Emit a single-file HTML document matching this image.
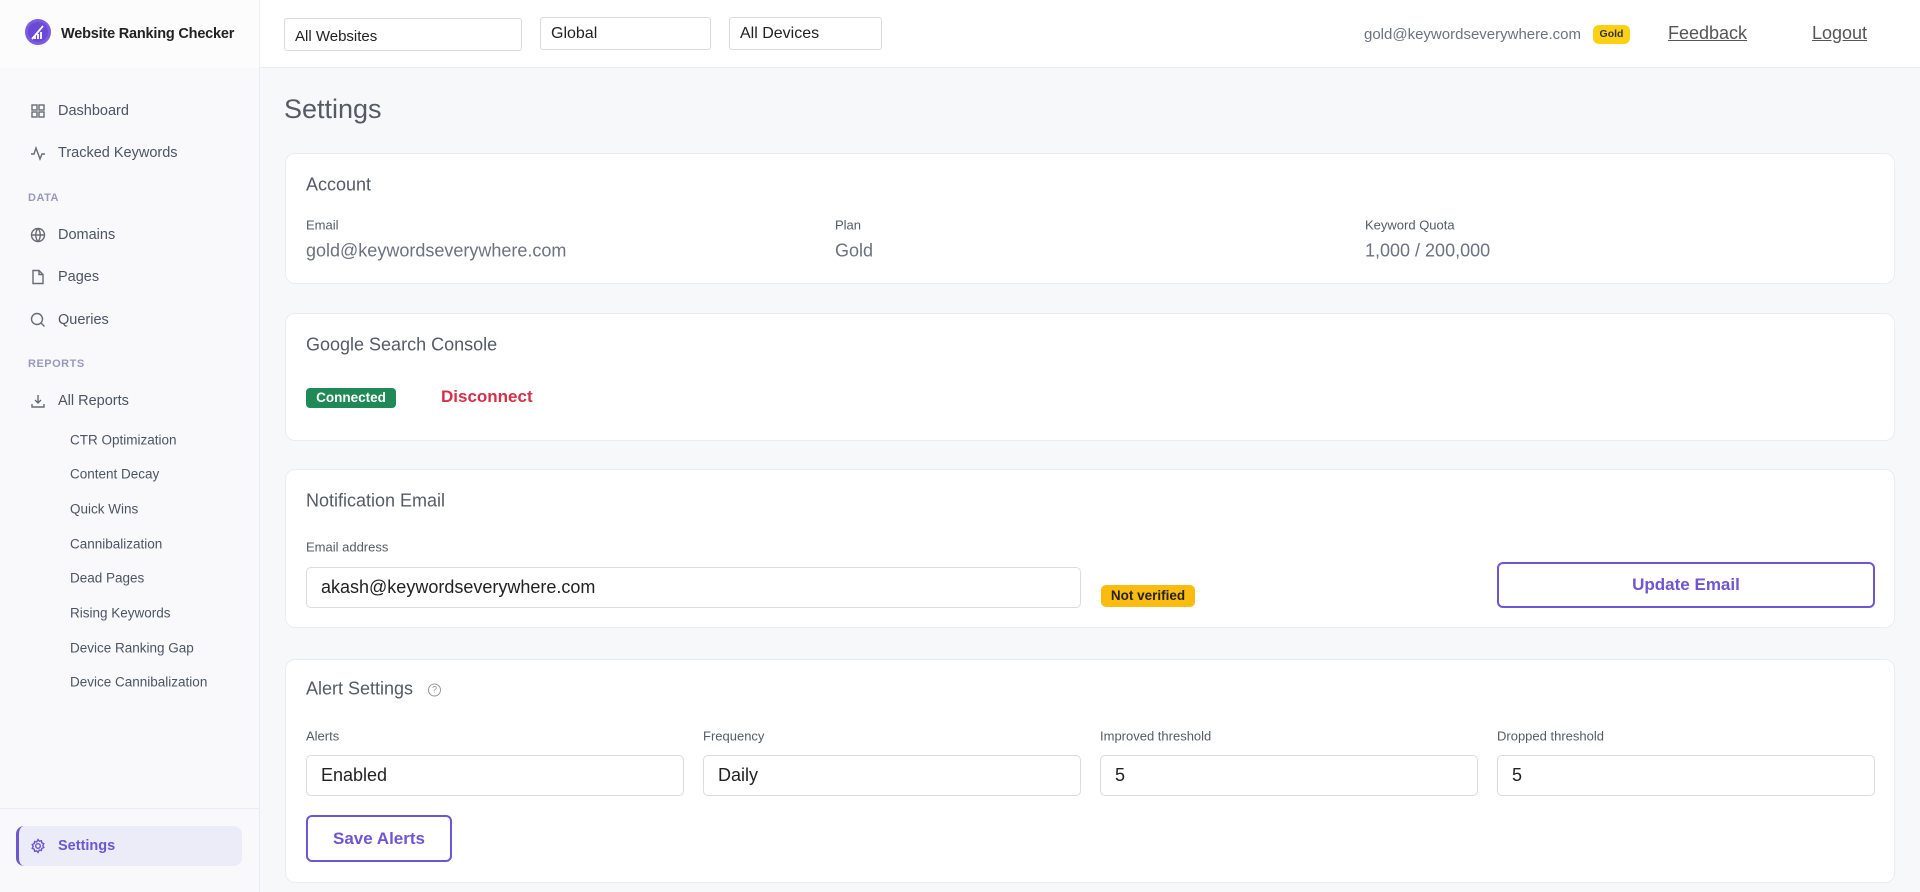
<!DOCTYPE html>
<html><head><meta charset="utf-8"><style>
*{box-sizing:border-box;margin:0;padding:0}
body{width:1920px;height:892px;overflow:hidden;background:#f7f8fa;font-family:"Liberation Sans",sans-serif;position:relative;color:#4b5563}
.abs{position:absolute}
#side{left:0;top:0;width:260px;height:892px;background:#f9f9fc;border-right:1px solid #ececf1}
#top{left:0;top:0;width:1920px;height:68px;background:#fff;border-bottom:1px solid #ececf1}
.sel{position:absolute;height:33px;border:1px solid #d9dbe0;border-radius:3px;background:#fff;font-size:16px;color:#222;padding:0 10px;display:flex;align-items:center}
.nav{position:absolute;left:30px;font-size:14.5px;color:#4b5563;display:flex;align-items:center;gap:12px;transform:translateY(-50%)}
.nav svg{width:16px;height:16px;fill:none;stroke:#666b75;stroke-width:1.4}
.sec{position:absolute;left:28px;font-size:11px;font-weight:bold;color:#9a98b8;letter-spacing:.5px;transform:translateY(-50%)}
.sub{position:absolute;left:70px;font-size:13.5px;color:#4b5563;transform:translateY(-50%)}
.card{position:absolute;left:285px;width:1610px;background:#fff;border:1px solid #ebecf0;border-radius:10px}
.ct{position:absolute;left:20px;font-size:18px;color:#555b66;transform:translateY(-50%)}
.lb{position:absolute;font-size:13px;color:#555b66;transform:translateY(-50%)}
.val{position:absolute;font-size:18px;color:#6b7280;transform:translateY(-50%)}
.inp{position:absolute;height:41px;border:1px solid #d9dbe0;border-radius:5px;background:#fff;font-size:18px;color:#222;padding:0 14px;display:flex;align-items:center}
.btn{position:absolute;border:2px solid #6d55d3;border-radius:6px;color:#6d55d3;font-weight:bold;font-size:17px;display:flex;align-items:center;justify-content:center;background:#fff}
</style></head><body>
<div id="top" class="abs"></div>
<div id="side" class="abs" style="top:68px;height:824px"></div>
<div class="abs" style="left:0;top:0;width:260px;height:68px;border-right:1px solid #ececf1;background:#fcfcfd"></div>
<svg class="abs" style="left:24px;top:18px" width="28" height="28" viewBox="0 0 28 28"><circle cx="14" cy="14" r="13" fill="#7b5ce0"/><circle cx="14" cy="14" r="10" fill="#6a49d8"/><path d="M8 21 L19 8 M11 21v-3 M14 21v-5 M17 21v-7" stroke="#fff" stroke-width="1.8" fill="none"/></svg>
<div class="abs" style="left:61px;top:26px;font-size:14.5px;font-weight:bold;color:#222;letter-spacing:-0.2px">Website Ranking Checker</div>
<div class="sel" style="left:284px;top:18px;width:238px;font-size:15px;padding-top:4px">All Websites</div>
<div class="sel" style="left:540px;top:17px;width:171px">Global</div>
<div class="sel" style="left:729px;top:17px;width:153px">All Devices</div>
<div class="abs" style="left:1364px;top:26px;font-size:15px;color:#6b7280">gold@keywordseverywhere.com</div>
<div class="abs" style="left:1593px;top:25px;width:37px;height:19px;background:#fcd015;border-radius:6px;font-size:10.5px;font-weight:bold;color:#333;text-align:center;line-height:19px">Gold</div>
<div class="abs" style="left:1668px;top:23px;font-size:18px;color:#555;text-decoration:underline">Feedback</div>
<div class="abs" style="left:1812px;top:23px;font-size:18px;color:#555;text-decoration:underline">Logout</div>

<div class="nav" style="top:111px"><svg viewBox="0 0 16 16"><rect x="2" y="2" width="5" height="5"/><rect x="9" y="2" width="5" height="5"/><rect x="2" y="9" width="5" height="5"/><rect x="9" y="9" width="5" height="5"/></svg>Dashboard</div>
<div class="nav" style="top:153px"><svg viewBox="0 0 16 16"><path d="M1 9h3l2-6 4 11 2-5h3"/></svg>Tracked Keywords</div>
<div class="sec" style="top:198px">DATA</div>
<div class="nav" style="top:235px"><svg viewBox="0 0 16 16"><circle cx="8" cy="8" r="6.5"/><path d="M1.5 8h13M8 1.5c-3 3.5-3 9.5 0 13M8 1.5c3 3.5 3 9.5 0 13"/></svg>Domains</div>
<div class="nav" style="top:277px"><svg viewBox="0 0 16 16"><path d="M3 1.5h6l4 4v9H3z M9 1.5v4h4"/></svg>Pages</div>
<div class="nav" style="top:320px"><svg viewBox="0 0 16 16"><circle cx="7" cy="7" r="5.5"/><path d="M11 11l3.5 3.5"/></svg>Queries</div>
<div class="sec" style="top:364px">REPORTS</div>
<div class="nav" style="top:401px"><svg viewBox="0 0 16 16"><path d="M8 2v8M5 7l3 3 3-3M2 11v3h12v-3"/></svg>All Reports</div>
<div class="sub" style="top:440px">CTR Optimization</div>
<div class="sub" style="top:474px">Content Decay</div>
<div class="sub" style="top:509px">Quick Wins</div>
<div class="sub" style="top:544px">Cannibalization</div>
<div class="sub" style="top:578px">Dead Pages</div>
<div class="sub" style="top:613px">Rising Keywords</div>
<div class="sub" style="top:648px">Device Ranking Gap</div>
<div class="sub" style="top:682px">Device Cannibalization</div>
<div class="abs" style="left:0;top:808px;width:259px;height:1px;background:#ececf1"></div>
<div class="abs" style="left:16px;top:826px;width:226px;height:40px;background:#ecebf8;border-radius:8px;border-left:3px solid #6d55d3"></div>
<div class="nav" style="top:846px;color:#6d55d3;font-weight:bold"><svg viewBox="0 0 16 16" style="stroke:#6d55d3"><circle cx="8" cy="8" r="2.3"/><path d="M8 1.5l1.3 1.7 2.1-.5.4 2.1 2 .9-1 1.9 1 1.9-2 .9-.4 2.1-2.1-.5L8 14.5l-1.3-1.7-2.1.5-.4-2.1-2-.9 1-1.9-1-1.9 2-.9.4-2.1 2.1.5z"/></svg>Settings</div>

<div class="abs" style="left:284px;top:94px;font-size:27px;color:#555b66">Settings</div>

<div class="card" style="top:153px;height:131px">
<div class="ct" style="top:31px">Account</div>
<div class="lb" style="left:20px;top:71px">Email</div><div class="val" style="left:20px;top:97px">gold@keywordseverywhere.com</div>
<div class="lb" style="left:549px;top:71px">Plan</div><div class="val" style="left:549px;top:97px">Gold</div>
<div class="lb" style="left:1079px;top:71px">Keyword Quota</div><div class="val" style="left:1079px;top:97px">1,000 / 200,000</div>
</div>
<div class="card" style="top:313px;height:128px">
<div class="ct" style="top:31px">Google Search Console</div>
<div class="abs" style="left:20px;top:74px;width:90px;height:20px;background:#1f8a55;border-radius:4px;color:#fff;font-size:13.5px;font-weight:bold;text-align:center;line-height:20px">Connected</div>
<div class="abs" style="left:155px;top:73px;font-size:17px;font-weight:bold;color:#d63049">Disconnect</div>
</div>
<div class="card" style="top:469px;height:159px">
<div class="ct" style="top:31px">Notification Email</div>
<div class="lb" style="left:20px;top:77px">Email address</div>
<div class="inp" style="left:20px;top:97px;width:775px">akash@keywordseverywhere.com</div>
<div class="abs" style="left:815px;top:115px;width:94px;height:22px;background:#fcbc0f;border-radius:5px;font-size:13.5px;font-weight:bold;color:#222;text-align:center;line-height:22px">Not verified</div>
<div class="btn" style="left:1211px;top:92px;width:378px;height:46px">Update Email</div>
</div>
<div class="card" style="top:659px;height:224px">
<div class="ct" style="top:29px">Alert Settings <span style="display:inline-block;width:13px;height:13px;border:1.3px solid #999;border-radius:50%;font-size:9px;line-height:11px;text-align:center;color:#999;margin-left:10px;vertical-align:2px">?</span></div>
<div class="lb" style="left:20px;top:76px">Alerts</div>
<div class="lb" style="left:417px;top:76px">Frequency</div>
<div class="lb" style="left:814px;top:76px">Improved threshold</div>
<div class="lb" style="left:1211px;top:76px">Dropped threshold</div>
<div class="inp" style="left:20px;top:95px;width:378px">Enabled</div>
<div class="inp" style="left:417px;top:95px;width:378px">Daily</div>
<div class="inp" style="left:814px;top:95px;width:378px">5</div>
<div class="inp" style="left:1211px;top:95px;width:378px">5</div>
<div class="btn" style="left:20px;top:155px;width:146px;height:47px">Save Alerts</div>
</div>
</body></html>
